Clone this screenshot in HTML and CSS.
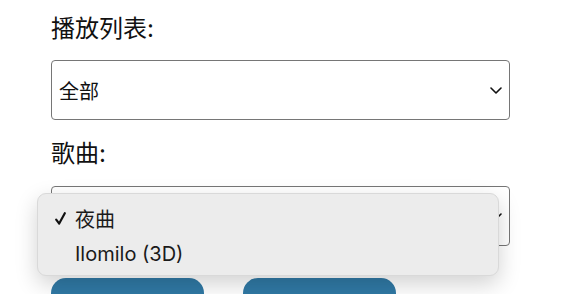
FILE: index.html
```html
<!DOCTYPE html>
<html lang="zh">
<head>
<meta charset="utf-8">
<title>播放列表</title>
<link rel="stylesheet" href="styles.css">
</head>
<body>
<main class="panel">
  <label class="field-label">播放列表:</label>
  <div class="select-box">
    <span class="select-value">全部</span>
    <svg class="chevron" width="12" height="7" viewBox="0 0 12 7"><path d="M1 1 L6 6 L11 1" fill="none" stroke="#111" stroke-width="1.6" stroke-linecap="round" stroke-linejoin="round"/></svg>
  </div>
  <label class="field-label second">歌曲:</label>
  <div class="select-wrap">
    <div class="select-box">
      <span class="select-value">夜曲</span>
      <svg class="chevron" width="12" height="7" viewBox="0 0 12 7"><path d="M1 1 L6 6 L11 1" fill="none" stroke="#111" stroke-width="1.6" stroke-linecap="round" stroke-linejoin="round"/></svg>
    </div>
    <ul class="menu">
      <li class="menu-item"><svg class="check" width="11" height="13" viewBox="0 0 11 13"><path d="M1.2 7.6 L4.2 11.6 L9.8 1.2" fill="none" stroke="#111" stroke-width="2.2" stroke-linecap="round" stroke-linejoin="round"/></svg><span>夜曲</span></li>
      <li class="menu-item"><span class="check-space"></span><span>Ilomilo (3D)</span></li>
    </ul>
  </div>
  <div class="buttons">
    <button class="btn"></button>
    <button class="btn"></button>
  </div>
</main>
</body>
</html>
```
FILE: styles.css
```css
html, body {
  margin: 0;
  padding: 0;
  background: #ffffff;
  height: 294px;
  overflow: hidden;
}
body {
  font-family: "Inter", "Noto Sans CJK SC", sans-serif;
  color: #111;
}
.panel {
  width: 459px;
  margin-left: 51px;
  padding-top: 14px;
  display: flex;
  flex-direction: column;
}
.field-label {
  display: block;
  font-size: 24px;
  line-height: 29px;
  height: 29px;
}
.field-label.second {
  margin-top: 19px;
}
.select-box {
  box-sizing: border-box;
  height: 60px;
  border: 1px solid #767676;
  border-radius: 4px;
  background: #fff;
  display: flex;
  align-items: center;
  justify-content: space-between;
  padding: 0 7px 0 7px;
  margin-top: 17px;
  font-size: 20px;
}
.select-wrap {
  position: relative;
  margin-top: 18px;
}
.select-wrap .select-box {
  margin-top: 0;
}
.chevron {
  display: block;
}
.menu {
  position: absolute;
  left: -14px;
  top: 7px;
  width: 462px;
  height: 83px;
  box-sizing: border-box;
  margin: 0;
  padding: 7px 0 0 0;
  list-style: none;
  background: #ececec;
  border: 1px solid #d9d9d9;
  border-radius: 9px;
  box-shadow: 0 8px 22px rgba(0, 0, 0, 0.18);
  font-size: 20px;
  color: #1a1a1a;
}
.menu-item {
  display: flex;
  align-items: center;
  gap: 9px;
  height: 35px;
  padding-left: 17px;
}
.check {
  display: block;
  flex: none;
}
.check-space {
  width: 11px;
  flex: none;
}
.buttons {
  display: flex;
  gap: 39px;
  margin-top: 32px;
}
.btn {
  flex: none;
  width: 153px;
  height: 50px;
  border: none;
  border-radius: 15px;
  background: #3079a5;
}
```
